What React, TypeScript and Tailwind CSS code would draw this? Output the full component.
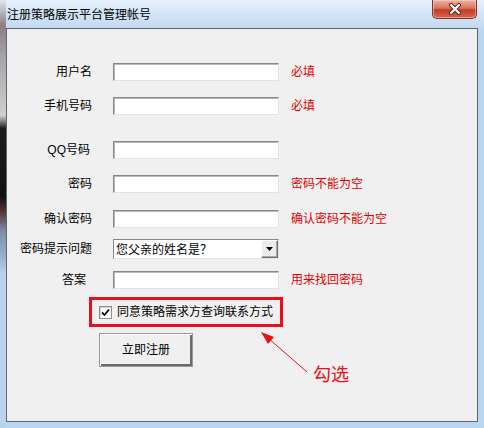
import type { ReactNode } from "react";

const inputCls =
	"w-[166px] h-[18px] bg-white border-t border-l border-[#828790] border-b border-r border-b-[#e3e3e3] border-r-[#e3e3e3] shadow-[inset_1px_1px_0_#b9b9b9]";

interface FieldRowProps {
	label: string;
	hint?: string;
	mt: string;
	labelPad?: string;
	children?: ReactNode;
}

const FieldRow = ({ label, hint, mt, labelPad = "", children }: FieldRowProps): ReactNode => (
	<div className={`flex items-center ${mt}`}>
		<div className={`w-[85px] text-right text-[12px] leading-[14px] text-black ${labelPad}`}>{label}</div>
		<div className="ml-[21px]">{children ?? <div className={inputCls} />}</div>
		{hint && <div className="ml-[12px] text-[12px] leading-[14px] text-[#e00000]">{hint}</div>}
	</div>
);

const CloseButton = (): ReactNode => (
	<div className="w-[45px] h-[19px] rounded-b-[5px] border border-t-0 border-[#7b3427] bg-[linear-gradient(180deg,#eab3a3_0%,#d9745c_45%,#c43c22_55%,#d5684d_100%)] shadow-[inset_0_0_0_1px_rgba(255,220,210,0.5)] flex items-center justify-center">
		<svg width="14" height="12" viewBox="0 0 14 12">
			<path d="M3 2 L11 10 M11 2 L3 10" stroke="#5a2418" strokeWidth="4" strokeLinecap="round" />
			<path d="M3 2 L11 10 M11 2 L3 10" stroke="#ffffff" strokeWidth="2.2" strokeLinecap="round" />
		</svg>
	</div>
);

const App = (): ReactNode => {
	return (
		<div className="relative w-[484px] h-[428px] flex bg-[#bcd6f1] font-['Liberation_Sans','Noto_Sans_CJK_SC',sans-serif] overflow-hidden">
			{/* left edge: desktop behind the aero frame */}
			<div className="w-[6px] h-full bg-[linear-gradient(180deg,#dfe6ee_0%,#8c7e86_6%,#a9a6a9_14%,#cfcfcf_27%,#1c1c1c_30%,#121212_46%,#4d2d2d_49%,#7c8ea6_54%,#98b2cc_60%,#b9d3ee_64%,#b9d3ee_100%)]" />

			<div className="flex-1 flex flex-col">
				{/* title bar */}
				<div className="h-[28px] flex justify-between bg-[linear-gradient(180deg,#e6f0fb_0%,#cfe2f6_60%,#c3d9f1_100%)]">
					<div className="pl-[1px] pt-[8px] text-[12px] leading-[14px] text-black">
						注册策略展示平台管理帐号
					</div>
					<div className="pr-[7px]">
						<CloseButton />
					</div>
				</div>

				{/* client area */}
				<div className="w-[472px] h-[394px] border border-[#5b6775] bg-[#f0f0f0] flex flex-col">
					<FieldRow label="用户名" hint="必填" mt="mt-[34px]" />
					<FieldRow label="手机号码" hint="必填" mt="mt-[16px]" />
					<FieldRow label="QQ号码" mt="mt-[26px]" labelPad="pr-[2px]" />
					<FieldRow label="密码" hint="密码不能为空" mt="mt-[16px]" />
					<FieldRow label="确认密码" hint="确认密码不能为空" mt="mt-[17px]" />
					<FieldRow label="密码提示问题" mt="mt-[11px]">
						<div className="w-[166px] h-[20px] bg-white border-t border-l border-[#828790] border-b border-r border-b-[#e3e3e3] border-r-[#e3e3e3] flex items-center">
							<span className="flex-1 pl-[2px] text-[12px] leading-[14px] text-black font-['Noto_Sans_CJK_SC',sans-serif]">您父亲的姓名是？</span>
							<div className="w-[17px] h-[18px] bg-[#ececec] border-t border-l border-white border-b border-r border-b-[#6f6f6f] border-r-[#6f6f6f] shadow-[inset_-1px_-1px_0_#a8a8a8] flex items-center justify-center">
								<svg width="7" height="4" viewBox="0 0 7 4">
									<path d="M0 0 H7 L3.5 4 Z" fill="#000" />
								</svg>
							</div>
						</div>
					</FieldRow>
					<FieldRow label="答案" hint="用来找回密码" mt="mt-[12px]" labelPad="pr-[6px]" />

					{/* highlighted checkbox */}
					<div className="ml-[82px] mt-[8px] w-[194px] h-[30px] border-[3px] border-[#e8101a] flex items-center pl-[7px] gap-[5px]">
						<div className="w-[13px] h-[13px] bg-white border border-[#8f8f8f] shadow-[inset_1px_1px_0_#d0d0d0] flex items-center justify-center">
							<svg width="9" height="9" viewBox="0 0 9 9">
								<path d="M1 4.5 L3.5 7 L8 1.5" stroke="#000" strokeWidth="1.8" fill="none" />
							</svg>
						</div>
						<span className="text-[12px] leading-[14px] text-black">同意策略需求方查询联系方式</span>
					</div>

					{/* submit button */}
					<button
						type="button"
						className="ml-[92px] mt-[6px] w-[94px] h-[34px] bg-[#f0f0f0] border border-[#9a9a9a] shadow-[inset_1px_1px_0_#ffffff,inset_-2px_-2px_0_#6a6a6a] text-[12px] leading-[14px] text-black"
					>
						立即注册
					</button>
				</div>
			</div>

			{/* annotation */}
			<svg className="absolute inset-0 pointer-events-none" width="484" height="428" viewBox="0 0 484 428">
				<line x1="307" y1="372" x2="268" y2="338" stroke="#e8101a" strokeWidth="1" />
				<polygon points="261,332 274,337 268,344" fill="#e8101a" />
			</svg>
			<div className="absolute left-[313px] top-[364px] text-[18px] leading-[18px] text-[#e8101a] font-['Noto_Sans_CJK_SC',sans-serif]">
				勾选
			</div>
		</div>
	);
};

export default App;
